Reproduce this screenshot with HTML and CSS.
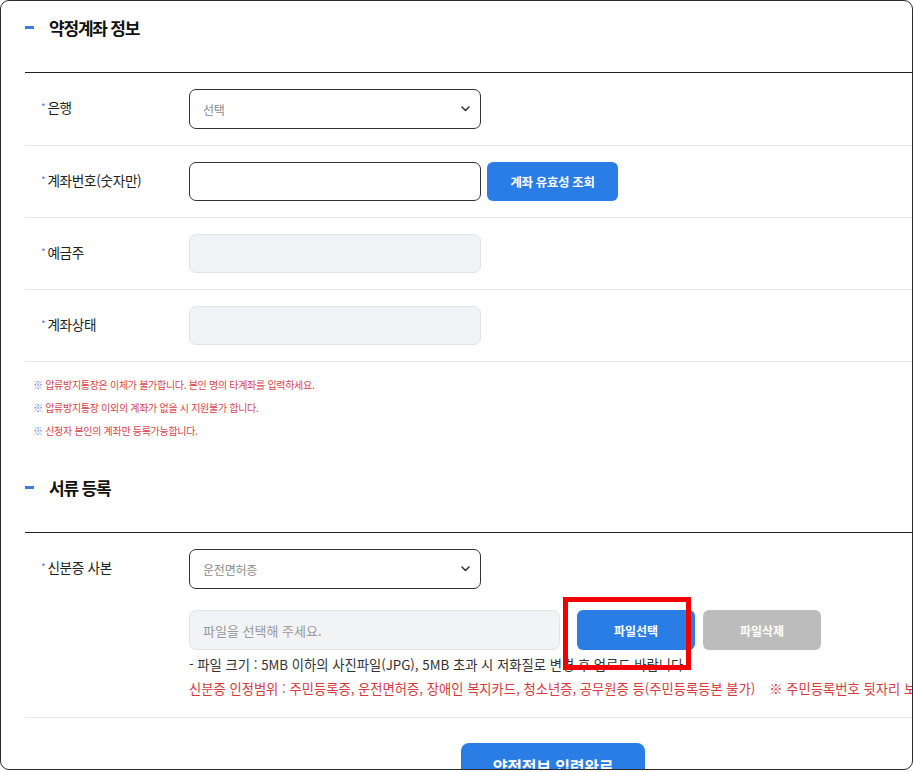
FILE: index.html
```html
<!DOCTYPE html>
<html lang="ko">
<head>
<meta charset="utf-8">
<title>약정계좌 정보</title>
<link rel="stylesheet" href="styles.css">
</head>
<body>
<div class="frame">
  <div class="page">
    <h2 class="sec-title"><span class="dash"></span>약정계좌 정보</h2>

    <div class="row">
      <div class="label"><span class="req">*</span>은행</div>
      <div class="ctrl">
        <div class="select"><span class="sel-text">선택</span>
          <svg class="chev" width="9" height="6" viewBox="0 0 9 6"><path d="M1 1l3.5 3.5L8 1" fill="none" stroke="#333" stroke-width="1.5" stroke-linecap="round" stroke-linejoin="round"/></svg>
        </div>
      </div>
    </div>

    <div class="row">
      <div class="label"><span class="req">*</span>계좌번호(숫자만)</div>
      <div class="ctrl inline">
        <input class="field" type="text">
        <button class="btn blue btn-check">계좌 유효성 조회</button>
      </div>
    </div>

    <div class="row">
      <div class="label"><span class="req">*</span>예금주</div>
      <div class="ctrl"><input class="field disabled" type="text" disabled></div>
    </div>

    <div class="row">
      <div class="label"><span class="req">*</span>계좌상태</div>
      <div class="ctrl"><input class="field disabled" type="text" disabled></div>
    </div>

    <ul class="notes">
      <li><span class="mark">※</span> 압류방지통장은 이체가 불가합니다. 본인 명의 타계좌를 입력하세요.</li>
      <li><span class="mark">※</span> 압류방지통장 이외의 계좌가 없을 시 지원불가 합니다.</li>
      <li><span class="mark">※</span> 신청자 본인의 계좌만 등록가능합니다.</li>
    </ul>

    <h2 class="sec-title second"><span class="dash"></span>서류 등록</h2>

    <div class="row">
      <div class="label"><span class="req">*</span>신분증 사본</div>
      <div class="ctrl">
        <div class="select"><span class="sel-text">운전면허증</span>
          <svg class="chev" width="9" height="6" viewBox="0 0 9 6"><path d="M1 1l3.5 3.5L8 1" fill="none" stroke="#333" stroke-width="1.5" stroke-linecap="round" stroke-linejoin="round"/></svg>
        </div>
        <div class="file-row">
          <input class="field file disabled" type="text" placeholder="파일을 선택해 주세요." disabled>
          <button class="btn blue btn-file">파일선택</button>
          <button class="btn gray btn-file">파일삭제</button>
        </div>
        <p class="desc">- 파일 크기 : 5MB 이하의 사진파일(JPG), 5MB 초과 시 저화질로 변경 후 업로드 바랍니다.</p>
        <p class="desc red">신분증 인정범위 : 주민등록증, 운전면허증, 장애인 복지카드, 청소년증, 공무원증 등(주민등록등본 불가)<span class="gap">※ 주민등록번호 뒷자리 보이지 않게 가려주세요.</span></p>
      </div>
    </div>

    <div class="submit-wrap">
      <button class="btn blue submit">약정정보 입력완료</button>
    </div>
  </div>
  <div class="highlight"></div>
</div>
</body>
</html>
```

FILE: styles.css
```css
* { box-sizing: border-box; }
html, body { margin: 0; padding: 0; background: #fff; }
body {
  font-family: "Noto Sans CJK KR", "Noto Sans", sans-serif;
  color: #222;
}
.frame {
  position: relative;
  width: 913px;
  height: 770px;
  border: 1px solid #2b2b2b;
  border-radius: 9px;
  overflow: hidden;
  background: #fff;
}
.page {
  width: 1080px;
  padding-left: 24px;
}
.sec-title {
  margin: 0;
  display: flex;
  align-items: center;
  height: 72px;
  padding-bottom: 18px;
  border-bottom: 1px solid #222;
  font-size: 17px;
  font-weight: 700;
  color: #111;
  letter-spacing: -1.2px;
}
.sec-title.second { margin-top: 19px; }
.dash {
  display: inline-block;
  width: 9px;
  height: 3px;
  background: #3d7bd6;
  margin-right: 15px;
}
.row {
  display: grid;
  grid-template-columns: 164px 1fr;
  align-items: start;
  padding: 16px 0;
  border-bottom: 1px solid #e8e8e8;
}
.label {
  padding-left: 16px;
  font-size: 13.6px;
  line-height: 36px;
  color: #222;
  letter-spacing: -0.3px;
}
.req {
  color: #5b84d6;
  font-size: 10px;
  margin-right: 2px;
  vertical-align: 2px;
}
.ctrl.inline {
  display: flex;
  gap: 6px;
}
.select {
  width: 292px;
  height: 40px;
  border: 1px solid #333;
  border-radius: 7px;
  display: flex;
  align-items: center;
  justify-content: space-between;
  padding: 0 10px 0 13px;
  background: #fff;
}
.sel-text {
  font-size: 12px;
  color: #8a8a8a;
  letter-spacing: -0.2px;
}
.chev { display: block; }
.field {
  width: 292px;
  height: 39px;
  border: 1px solid #333;
  border-radius: 7px;
  background: #fff;
  padding: 0 13px;
  font-family: inherit;
  font-size: 13px;
  outline: none;
}
.field.disabled {
  background: #f2f3f5;
  border: 1px solid #e1e3e6;
}
.field.file {
  width: 371px;
  height: 40px;
  margin-right: 17px;
  font-size: 13px;
}
.field.file::placeholder { color: #9a9a9a; }
.btn {
  border: 0;
  border-radius: 6px;
  color: #fff;
  font-family: inherit;
  font-weight: 700;
  cursor: pointer;
}
.blue { background: #2b7de6; }
.gray { background: #bcbcbc; }
.btn-check {
  width: 131px;
  height: 39px;
  font-size: 12.4px;
  letter-spacing: -0.3px;
}
.file-row {
  display: flex;
  align-items: center;
  margin-top: 21px;
}
.btn-file {
  width: 118px;
  height: 40px;
  font-size: 12px;
}
.btn-file + .btn-file { margin-left: 8px; }
.notes {
  list-style: none;
  margin: 0;
  padding: 11px 0 0 8px;
  font-size: 10px;
  line-height: 23px;
  color: #d6454b;
  letter-spacing: -0.3px;
}
.mark { color: #5b84d6; }
.desc {
  margin: 0;
  font-size: 13.3px;
  line-height: 24px;
  color: #333;
  white-space: nowrap;
  letter-spacing: 0;
}
.file-row + .desc { margin-top: 3px; }
.desc.red { color: #d43a3f; }
.gap { margin-left: 14px; }
.submit-wrap {
  display: flex;
  padding-left: 436px;
  margin-top: 25px;
}
.submit {
  width: 184px;
  height: 46px;
  border-radius: 8px;
  font-size: 16px;
  letter-spacing: -0.2px;
}
.highlight {
  position: absolute;
  left: 562px;
  top: 596px;
  width: 128px;
  height: 73px;
  border: 5px solid #f20000;
}
```
